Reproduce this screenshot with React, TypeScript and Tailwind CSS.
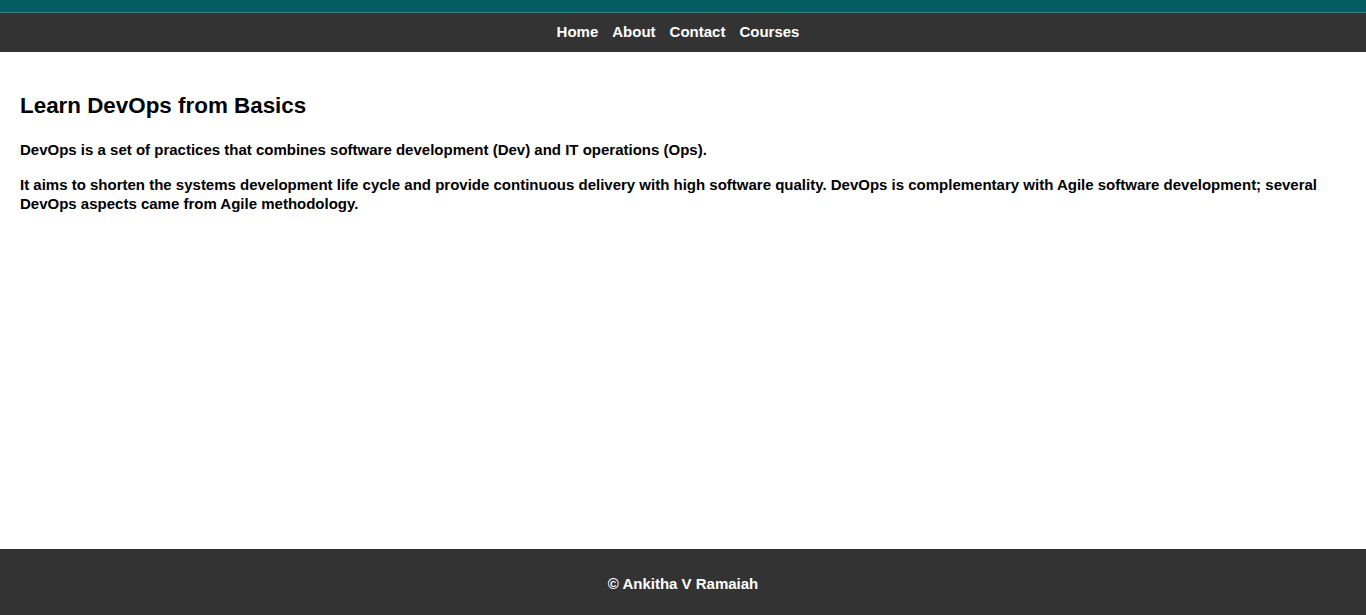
export default function App() {
  return (
    <div className="min-h-[615px] flex flex-col bg-white font-['Liberation_Sans',sans-serif] text-black">
      <header className="h-[13px] bg-[#055c62] border-b border-[#3d8086]" />
      <nav className="bg-[#333333] h-[39px] flex items-center justify-center gap-[14px] pr-[10px] text-white text-[15px] font-bold">
        <a href="#">Home</a>
        <a href="#">About</a>
        <a href="#">Contact</a>
        <a href="#">Courses</a>
      </nav>
      <main className="flex-1 px-5 pt-[40px]">
        <h1 className="text-[22.4px] font-bold leading-tight mb-[20px]">Learn DevOps from Basics</h1>
        <p className="text-[15px] font-bold leading-[19px] mb-[16px]">
          DevOps is a set of practices that combines software development (Dev) and IT operations (Ops).
        </p>
        <p className="text-[15px] font-bold leading-[19px]">
          It aims to shorten the systems development life cycle and provide continuous delivery with high software
          quality. DevOps is complementary with Agile software development; several DevOps aspects came from Agile
          methodology.
        </p>
      </main>
      <footer className="bg-[#333333] h-[66px] pt-[4px] flex items-center justify-center text-white text-[15px] font-bold">
        © Ankitha V Ramaiah
      </footer>
    </div>
  );
}
